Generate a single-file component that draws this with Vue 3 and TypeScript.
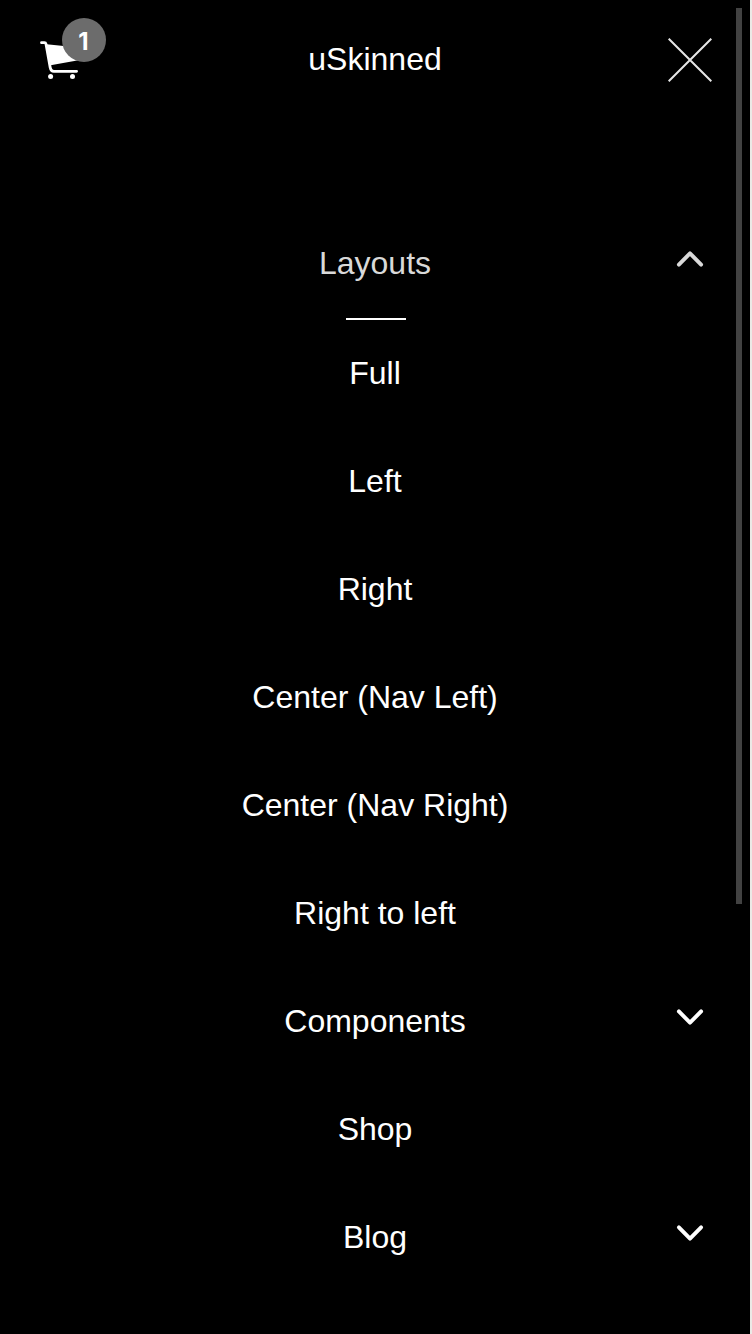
<script setup lang="ts">
import { ref } from 'vue'

interface NavItem {
  label: string
  children?: string[]
}

const open = ref('Layouts')
const items: NavItem[] = [
  {
    label: 'Layouts',
    children: ['Full', 'Left', 'Right', 'Center (Nav Left)', 'Center (Nav Right)', 'Right to left'],
  },
  { label: 'Components', children: [] },
  { label: 'Shop' },
  { label: 'Blog', children: [] },
]

function toggle(item: NavItem) {
  if (item.children) open.value = open.value === item.label ? '' : item.label
}
</script>

<template>
  <div class="page">
    <div class="panel">
      <header class="header">
        <div class="cart">
          <svg class="cart-icon" width="40" height="40" viewBox="0 0 40 40">
            <path d="M6.6 4.2 L38.5 7.4 V20.2 L10.6 25.2 Z" fill="#fff" />
            <path
              d="M1.5 2.7 H4.4 Q5.7 2.7 6 4 L10.2 27.5 Q10.9 31.3 13.8 31.3 H36.6"
              fill="none"
              stroke="#fff"
              stroke-width="2.8"
              stroke-linecap="round"
              stroke-linejoin="round"
            />
            <circle cx="10.6" cy="36.6" r="2.5" fill="#fff" />
            <circle cx="32.5" cy="36.6" r="2.5" fill="#fff" />
          </svg>
          <span class="badge">1</span>
        </div>
        <h1 class="title">uSkinned</h1>
        <svg class="close" width="44" height="44" viewBox="0 0 44 44">
          <path d="M0.7 0.7 L43.3 43.3 M43.3 0.7 L0.7 43.3" stroke="#e6e6e6" stroke-width="2" fill="none" />
        </svg>
      </header>
      <nav class="nav">
        <template v-for="item in items" :key="item.label">
          <div class="row" :class="{ active: open === item.label }" @click="toggle(item)">
            <span>{{ item.label }}</span>
            <svg v-if="item.children" class="chevron" width="28" height="18" viewBox="0 0 28 18">
              <path
                d="M2.9 3.4 L14 14.7 L25.1 3.4"
                fill="none"
                stroke="currentColor"
                stroke-width="3.9"
                stroke-linecap="round"
                stroke-linejoin="round"
              />
            </svg>
          </div>
          <div v-if="open === item.label" class="submenu">
            <div v-for="child in item.children" :key="child" class="row">
              <span>{{ child }}</span>
            </div>
          </div>
        </template>
      </nav>
      <div class="scrollbar"></div>
    </div>
  </div>
</template>

<style>
body {
  margin: 0;
  background: #000;
}
</style>

<style scoped>
.page {
  height: 1334px;
  overflow: hidden;
  background: #ebe9e6;
  font-family: "Liberation Sans", Arial, sans-serif;
  font-size: 32px;
  color: #fff;
}
.panel {
  position: relative;
  width: 750px;
  height: 1334px;
  overflow: hidden;
  background: #000;
}
.header {
  display: grid;
  grid-template-columns: 66px 1fr 66px;
  align-items: center;
  height: 120px;
  padding: 0 40px;
}
.cart {
  position: relative;
  width: 66px;
  height: 40px;
}
.cart-icon {
  display: block;
}
.badge {
  position: absolute;
  left: 22px;
  top: -22px;
  width: 44px;
  height: 44px;
  border-radius: 50%;
  background: #6c6c6c;
  font-family: Inter, "Liberation Sans", sans-serif;
  font-size: 24px;
  font-weight: 700;
  line-height: 48px;
  text-align: center;
  text-indent: -1px;
}
.title {
  margin: 0;
  font-size: 32px;
  font-weight: 400;
  line-height: 118px;
  height: 120px;
  text-align: center;
}
.close {
  display: block;
  justify-self: end;
  margin-right: -2px;
}
.nav {
  padding-top: 89px;
}
.row {
  position: relative;
  height: 108px;
  line-height: 108px;
  text-align: center;
  cursor: pointer;
}
.row.active {
  color: #d9d9d9;
}
.chevron {
  position: absolute;
  right: 46px;
  top: 41px;
}
.active .chevron {
  transform: scaleY(-1);
}
.submenu::before {
  content: "";
  display: block;
  width: 60px;
  height: 2px;
  margin: 1px auto -1px;
  position: relative;
  left: 1px;
  background: #fff;
}
.scrollbar {
  position: absolute;
  top: 8px;
  right: 8px;
  width: 6px;
  height: 896px;
  background: #424242;
}
</style>
